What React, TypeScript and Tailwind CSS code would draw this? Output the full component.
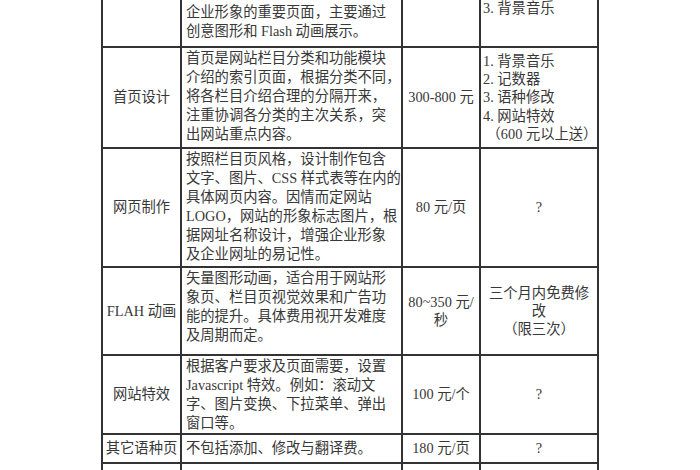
import React from "react"

type Row = {
  label: string
  desc: string[]
  price: string[]
  extra: string[]
  extraLeft?: boolean
  h: string
}

const rows: Row[] = [
  {
    label: "首页设计",
    desc: [
      "首页是网站栏目分类和功能模块",
      "介绍的索引页面，根据分类不同，",
      "将各栏目介绍合理的分隔开来，",
      "注重协调各分类的主次关系，突",
      "出网站重点内容。",
    ],
    price: ["300-800 元"],
    extra: ["1. 背景音乐", "2. 记数器", "3. 语种修改", "4. 网站特效", "\u00a0（600 元以上送）"],
    extraLeft: true,
    h: "h-[101px]",
  },
  {
    label: "网页制作",
    desc: [
      "按照栏目页风格，设计制作包含",
      "文字、图片、CSS 样式表等在内的",
      "具体网页内容。因情而定网站",
      "LOGO，网站的形象标志图片，根",
      "据网址名称设计，增强企业形象",
      "及企业网址的易记性。",
    ],
    price: ["80 元/页"],
    extra: ["?"],
    h: "h-[119px]",
  },
  {
    label: "FLAH 动画",
    desc: [
      "矢量图形动画，适合用于网站形",
      "象页、栏目页视觉效果和广告功",
      "能的提升。具体费用视开发难度",
      "及周期而定。",
    ],
    price: ["80~350 元/", "秒"],
    extra: ["三个月内免费修", "改", "（限三次）"],
    h: "h-[88px]",
  },
  {
    label: "网站特效",
    desc: [
      "根据客户要求及页面需要，设置",
      "Javascript 特效。例如：滚动文",
      "字、图片变换、下拉菜单、弹出",
      "窗口等。",
    ],
    price: ["100 元/个"],
    extra: ["?"],
    h: "h-[79px]",
  },
]

function Lines({ items }: { items: string[] }) {
  return (
    <>
      {items.map((t, i) => (
        <div key={i} className="whitespace-nowrap">
          {t || "\u00a0"}
        </div>
      ))}
    </>
  )
}

const cell = "border-2 border-[#333]"

export default function App() {
  return (
    <div className="h-[470px] w-[700px] overflow-hidden bg-white">
      <table className="mx-auto -mt-[57px] w-[498px] table-fixed border-collapse font-[family-name:Liberation_Serif,Noto_Sans_CJK_SC,serif] text-[14.3px] leading-[19px] text-[#383838]">
        <colgroup>
          <col className="w-[79px]" />
          <col className="w-[221px]" />
          <col className="w-[78px]" />
          <col className="w-[118px]" />
        </colgroup>
        <tbody>
          {/* row cut off by the top edge of the shot */}
          <tr className="h-[103px]">
            <td className={cell}></td>
            <td className={`${cell} align-top pt-[39px] pl-[4px]`}>
              <Lines
                items={[
                  "素，是网站展示企业文化、体现",
                  "企业形象的重要页面，主要通过",
                  "创意图形和 Flash 动画展示。",
                ]}
              />
            </td>
            <td className={cell}></td>
            <td className={`${cell} align-top pt-[54px] pl-[2px]`}>
              <Lines items={["3. 背景音乐"]} />
            </td>
          </tr>

          {rows.map((r) => (
            <tr key={r.label} className={r.h}>
              <td className={`${cell} align-middle text-center`}>{r.label}</td>
              <td className={`${cell} align-top pt-[1px] pl-[4px]`}>
                <Lines items={r.desc} />
              </td>
              <td className={`${cell} align-middle text-center`}>
                <div className="leading-[18.5px]">
                  <Lines items={r.price} />
                </div>
              </td>
              <td className={`${cell} align-middle ${r.extraLeft ? "pl-[2px]" : "text-center"}`}>
                <div className="leading-[18.3px]">
                  <Lines items={r.extra} />
                </div>
              </td>
            </tr>
          ))}

          <tr className="h-[29px]">
            <td className={`${cell} align-middle text-center px-0 whitespace-nowrap`}>其它语种页</td>
            <td className={`${cell} align-middle pl-[4px] whitespace-nowrap`}>不包括添加、修改与翻译费。</td>
            <td className={`${cell} align-middle text-center whitespace-nowrap`}>180 元/页</td>
            <td className={`${cell} align-middle text-center`}>?</td>
          </tr>

          <tr className="h-[40px]">
            <td className={cell}></td>
            <td className={cell}></td>
            <td className={cell}></td>
            <td className={cell}></td>
          </tr>
        </tbody>
      </table>
    </div>
  )
}
